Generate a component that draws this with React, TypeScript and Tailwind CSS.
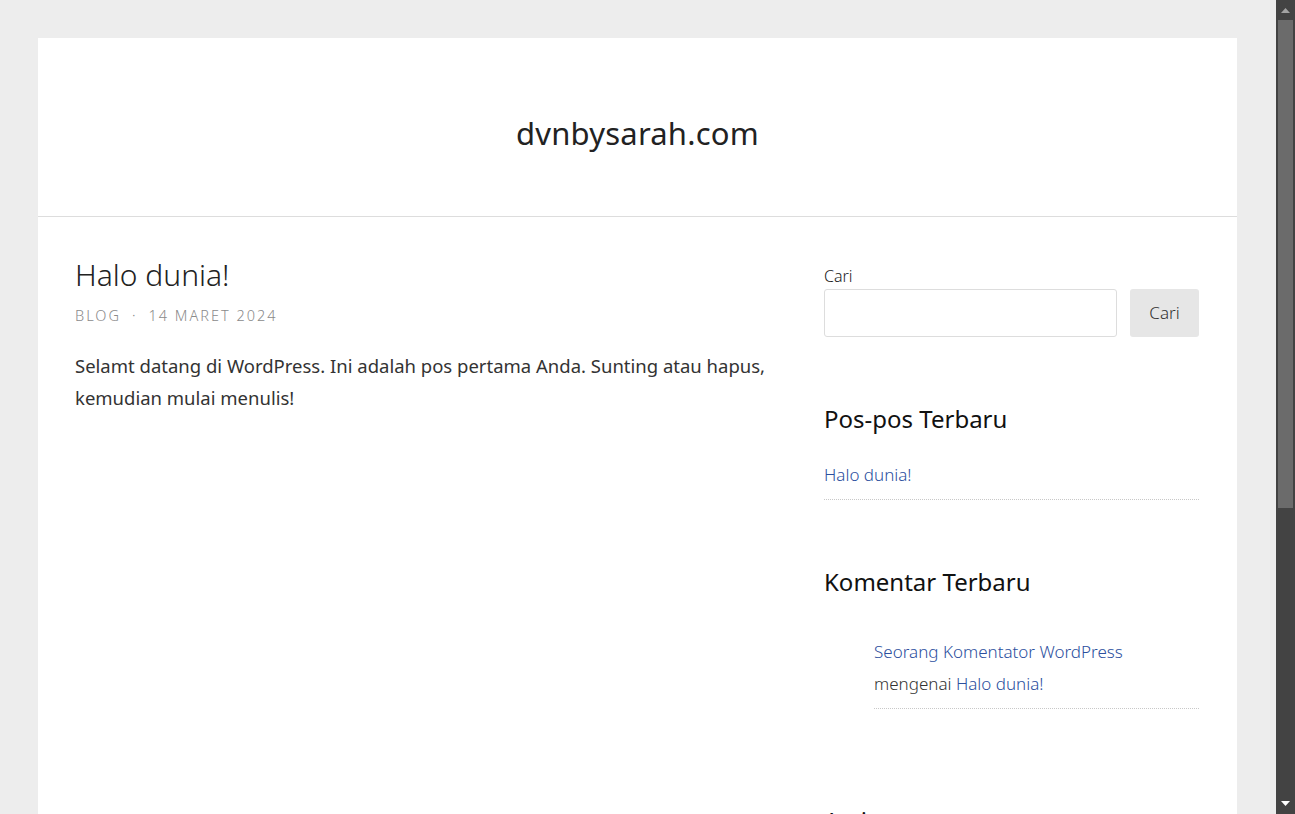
export default function App() {
  const font = { fontFamily: '"Noto Sans", "Open Sans", sans-serif' };
  return (
    <div className="flex h-[814px] w-full overflow-hidden bg-[#ededed]" style={font}>
      {/* Page */}
      <div className="flex-1 overflow-hidden pt-[38px]">
        <div className="ml-[38px] w-[1199px] bg-white">
          {/* Header */}
          <header className="flex h-[179px] items-center justify-center border-b border-[#dddddd] pt-[12px]">
            <h1 className="text-[31px] font-normal tracking-[0.2px] text-[#222]">dvnbysarah.com</h1>
          </header>

          <div className="flex justify-between pl-[37px] pr-[38px] pt-[38px]">
            {/* Main */}
            <main className="w-[700px]">
              <h2 className="text-[30px] font-light leading-[40px] text-[#222]">Halo dunia!</h2>
              <div className="mt-[10px] flex items-center text-[14.5px] font-light uppercase tracking-[2px] text-[#8a8a8a]">
                <span>Blog</span>
                <span className="mx-[11px]">·</span>
                <span>14 Maret 2024</span>
              </div>
              <p className="mt-[23px] text-[18.5px] leading-[32px] text-[#333]">
                Selamt datang di WordPress. Ini adalah pos pertama Anda. Sunting atau hapus, kemudian mulai menulis!
              </p>
            </main>

            {/* Sidebar */}
            <aside className="w-[375px] pt-[11px]">
              <label className="block text-[16px] font-light leading-[20px] text-[#222]">Cari</label>
              <div className="mt-[3px] flex gap-[13px]">
                <input className="h-[48px] flex-1 rounded-[3px] border border-[#dddddd] bg-white" />
                <button className="h-[48px] w-[69px] rounded-[3px] bg-[#e6e6e6] text-[17px] font-light text-[#333]">
                  Cari
                </button>
              </div>

              <section className="mt-[65px]">
                <h3 className="text-[24px] font-normal leading-[34px] text-[#111]">Pos-pos Terbaru</h3>
                <ul className="mt-[25px]">
                  <li className="border-b border-dotted border-[#c8c8c8] pb-[10px] text-[17px] font-light leading-[28px] text-[#2c4f9e]">
                    Halo dunia!
                  </li>
                </ul>
              </section>

              <section className="mt-[65px]">
                <h3 className="text-[24px] font-normal leading-[34px] text-[#111]">Komentar Terbaru</h3>
                <ul className="mt-[37px] pl-[50px]">
                  <li className="border-b border-dotted border-[#c8c8c8] pb-[8px] text-[17px] font-light leading-[32px] text-[#333]">
                    <span className="text-[#2c4f9e]">Seorang Komentator WordPress</span>
                    <br />
                    mengenai <span className="text-[#2c4f9e]">Halo dunia!</span>
                  </li>
                </ul>
              </section>

              <section className="mt-[95px]">
                <h3 className="text-[24px] font-normal leading-[34px] text-[#111]">Arsip</h3>
              </section>
            </aside>
          </div>
        </div>
      </div>

      {/* Scrollbar */}
      <div className="flex w-[19px] flex-col items-center bg-[#434343]">
        <svg width="19" height="18" viewBox="0 0 19 18">
          <path d="M5 13 L9.5 8 L14 13 Z" fill="#a3a3a3" />
        </svg>
        <div className="mt-[2px] h-[488px] w-[15px] bg-[#6b6b6b]" />
        <div className="flex-1" />
        <svg width="19" height="18" viewBox="0 0 19 18">
          <path d="M5 5 L14 5 L9.5 10 Z" fill="#ffffff" />
        </svg>
      </div>
    </div>
  );
}
